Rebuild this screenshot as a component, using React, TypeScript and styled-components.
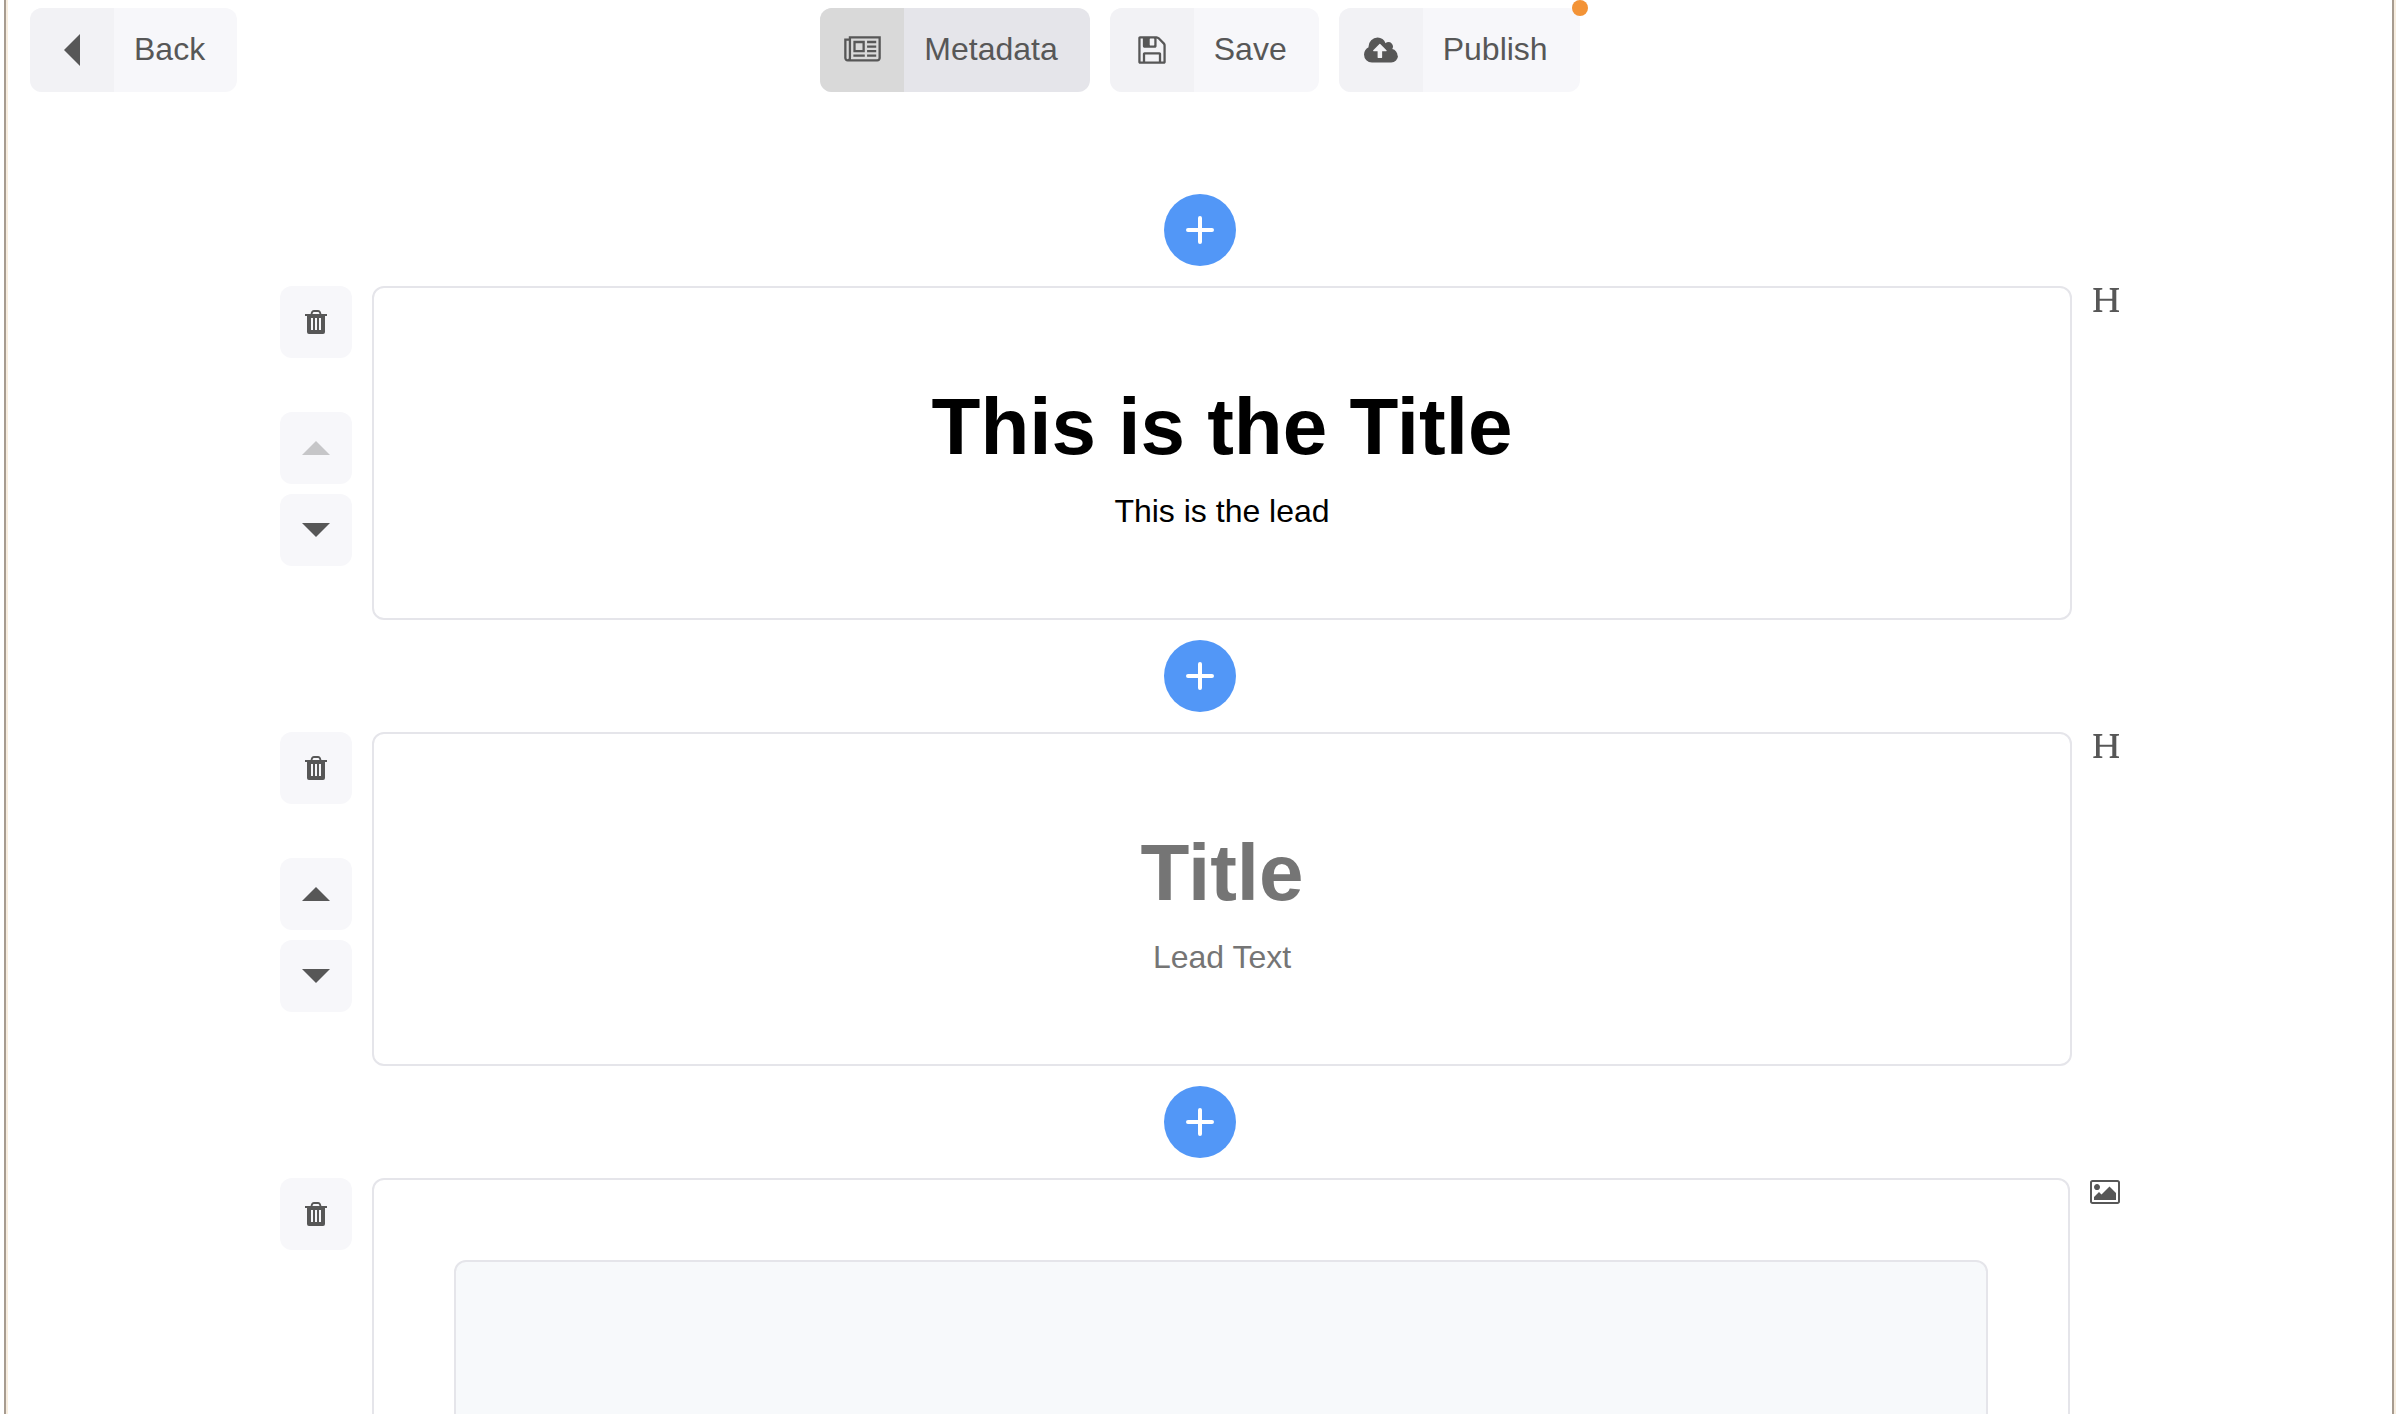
import React, { useState } from "react";
import styled, { createGlobalStyle, css } from "styled-components";

const color = {
  text: "#575757",
  subtle: "#f7f7fa",
  subtleIcon: "#f2f2f5",
  line: "#e5e5ea",
  activeIcon: "#d9d9d9",
  primary: "#5297f7",
  warning: "#f39336",
  frame: "#a79c90",
  frameLight: "#f7eddf",
};

const GlobalStyle = createGlobalStyle`
  *, *::before, *::after { box-sizing: border-box; }
  body {
    margin: 0;
    background: #fff;
    color: ${color.text};
    font-family: "Liberation Sans", Arial, Helvetica, sans-serif;
    font-size: 32px;
  }
`;

const Page = styled.div`
  height: 100vh;
  overflow: hidden;
  padding: 0 6px 0 4px;
`;

const Frame = styled.div`
  min-height: 100%;
  padding-left: 2px;
  border: solid ${color.frame};
  border-width: 0 2px;
  box-shadow: inset 2px 0 ${color.frameLight}, 2px 0 ${color.frameLight};
`;

const Toolbar = styled.header`
  display: grid;
  grid-template-columns: 1fr auto 1fr;
  padding: 8px 22px 0;
`;

const Actions = styled.div`
  display: flex;
  gap: 20px;
`;

const buttonReset = css`
  border: 0;
  padding: 0;
  font: inherit;
  color: inherit;
  cursor: pointer;
`;

const ToolButton = styled.button<{ $active?: boolean }>`
  ${buttonReset}
  position: relative;
  display: inline-flex;
  align-items: center;
  height: 84px;
  border-radius: 12px;
  background: ${(p) => (p.$active ? color.line : color.subtle)};
`;

const ToolIcon = styled.span<{ $active?: boolean }>`
  display: flex;
  align-items: center;
  justify-content: center;
  width: 84px;
  height: 100%;
  border-radius: 12px 0 0 12px;
  background: ${(p) => (p.$active ? color.activeIcon : color.subtleIcon)};
`;

const ToolLabel = styled.span`
  padding: 0 32px 2px 20px;
  line-height: 44px;
`;

const Badge = styled.span`
  position: absolute;
  top: -8px;
  right: -8px;
  width: 16px;
  height: 16px;
  border-radius: 50%;
  background: ${color.warning};
`;

const Editor = styled.main`
  display: flex;
  flex-direction: column;
  gap: 20px;
  max-width: 1840px;
  margin: 102px auto 0;
`;

const AddButton = styled.button`
  ${buttonReset}
  display: flex;
  align-items: center;
  justify-content: center;
  align-self: center;
  width: 72px;
  height: 72px;
  border-radius: 50%;
  background: ${color.primary};
`;

const Block = styled.section`
  display: flex;
  align-items: stretch;
  gap: 20px;
`;

const BlockControls = styled.div`
  display: flex;
  flex-direction: column;
`;

const SquareButton = styled.button`
  ${buttonReset}
  display: flex;
  align-items: center;
  justify-content: center;
  width: 72px;
  height: 72px;
  border-radius: 12px;
  background: ${color.subtle};

  &:disabled {
    cursor: default;
  }
  &:disabled svg {
    opacity: 0.3;
  }
`;

const MoveButtons = styled.div`
  display: flex;
  flex-direction: column;
  gap: 10px;
  margin: auto 0;
`;

const Card = styled.div`
  flex: 1;
  min-width: 0;
  padding: 80px;
  border: 2px solid ${color.line};
  border-radius: 12px;
`;

const BlockType = styled.div`
  flex: none;
`;

const Field = styled.input`
  display: block;
  width: 100%;
  padding: 0;
  border: 0;
  outline: 0;
  background: transparent;
  color: #000;
  font-family: inherit;
  text-align: center;

  &::placeholder {
    color: #757575;
    opacity: 1;
  }
`;

const TitleField = styled(Field)`
  height: 118px;
  font-size: 80px;
  font-weight: bold;
`;

const LeadField = styled(Field)`
  height: 46px;
  margin: 2px 0 4px;
  font-size: 32px;
`;

const ImageDrop = styled.div`
  height: 640px;
  border: 2px solid ${color.line};
  border-radius: 12px;
  background: #f7f9fb;
`;

const Svg = styled.svg`
  display: block;
  fill: currentColor;
`;

const BackIcon = () => (
  <Svg width="16" height="32" viewBox="0 0 16 32" aria-hidden="true">
    <path d="M16 0v32L0 16z" />
  </Svg>
);

const NewspaperIcon = () => (
  <Svg width="37" height="32" viewBox="0 0 2048 1792" aria-hidden="true">
    <path d="M1024 512h-384v384h384v-384zm-512 640h640v128h-640v-128zm0-768h640v640h-640v-640zm768 768h512v128h-512v-128zm0-256h512v128h-512v-128zm0-256h512v128h-512v-128zm0-256h512v128h-512v-128zm-1024 960v-960h-128v960q0 26 19 45t45 19 45-19 19-45zm1664 0v-1088h-1536v1088q0 33-11 64h1483q26 0 45-19t19-45zm128-1216v1216q0 80-56 136t-136 56h-1664q-80 0-136-56t-56-136v-1088h256v-128h1792z" />
  </Svg>
);

const SaveIcon = () => (
  <Svg width="32" height="32" viewBox="0 0 1792 1792" aria-hidden="true">
    <path d="M512 1536h768v-384h-768v384zm896 0h128v-896q0-14-10-38.5t-20-34.5l-281-281q-10-10-34-20t-39-10v416q0 40-28 68t-68 28h-576q-40 0-68-28t-28-68v-416h-128v1280h128v-416q0-40 28-68t68-28h832q40 0 68 28t28 68v416zm-384-928v-320q0-13-9.5-22.5t-22.5-9.5h-192q-13 0-22.5 9.5t-9.5 22.5v320q0 13 9.5 22.5t22.5 9.5h192q13 0 22.5-9.5t9.5-22.5zm640 32v928q0 40-28 68t-68 28h-1344q-40 0-68-28t-28-68v-1344q0-40 28-68t68-28h928q40 0 88 20t76 48l280 280q28 28 48 76t20 88z" />
  </Svg>
);

const CloudUploadIcon = () => (
  <Svg width="34" height="32" viewBox="0 0 1920 1792" aria-hidden="true">
    <path d="M1280 928q0-14-9-23l-352-352q-9-9-23-9t-23 9l-351 351q-10 12-10 24 0 14 9 23t23 9h224v352q0 13 9.5 22.5t22.5 9.5h192q13 0 22.5-9.5t9.5-22.5v-352h224q13 0 22.5-9.5t9.5-22.5zm640 288q0 159-112.5 271.5t-271.5 112.5h-1088q-185 0-316.5-131.5t-131.5-316.5q0-130 70-240t188-165q-2-30-2-43 0-212 150-362t362-150q156 0 275 87t173 231q71-62 166-62 106 0 181 75t75 181q0 76-41 138 130 31 213.5 135.5t83.5 238.5z" />
  </Svg>
);

const TrashIcon = () => (
  <Svg width="22" height="24" viewBox="0 0 22 24" aria-hidden="true">
    <path
      fillRule="evenodd"
      d="M0 4h5.6C6 1.400 7.200 0 9 0h4c1.800 0 3 1.400 3.400 4H22v2h-2v16a2 2 0 0 1-2 2H4a2 2 0 0 1-2-2V6H0zM7.500 4h7c-.3-1.400-.8-2-1.700-2H9.200c-.9 0-1.400.6-1.700 2zM6 8v12h2V8zM10 8v12h2V8zM14 8v12h2V8z"
    />
  </Svg>
);

const UpIcon = () => (
  <Svg width="28" height="14" viewBox="0 0 28 14" aria-hidden="true">
    <path d="M14 0l14 14H0z" />
  </Svg>
);

const DownIcon = () => (
  <Svg width="28" height="14" viewBox="0 0 28 14" aria-hidden="true">
    <path d="M0 0h28L14 14z" />
  </Svg>
);

const PlusIcon = () => (
  <Svg width="28" height="28" viewBox="0 0 28 28" aria-hidden="true">
    <path d="M14 2v24M2 14h24" stroke="#fff" strokeWidth="4" strokeLinecap="round" />
  </Svg>
);

const HeadingIcon = () => (
  <Svg width="28" height="28" viewBox="0 0 28 28" role="img" aria-label="Heading block">
    <path d="M1.300 2h9v1.500l-2.600.6v8.600h12.600V4.100l-2.600-.6V2h9.300v1.500l-2.700.6v19.800l2.700.6V26h-9.300v-1.500l2.600-.6v-9.200H7.700v9.200l2.600.6V26h-9v-1.500l2.700-.6V4.100l-2.700-.6z" />
  </Svg>
);

const ImageIcon = () => (
  <Svg width="30" height="28" viewBox="-64 0 1920 1792" role="img" aria-label="Image block">
    <path d="M576 576q0 80-56 136t-136 56-136-56-56-136 56-136 136-56 136 56 56 136zm1024 384v448h-1408v-192l320-320 160 160 512-512zm96-704h-1600q-13 0-22.500 9.500t-9.500 22.500v1216q0 13 9.500 22.500t22.500 9.500h1600q13 0 22.500-9.500t9.500-22.500v-1216q0-13-9.500-22.500t-22.500-9.500zm160 32v1216q0 66-47 113t-113 47h-1600q-66 0-113-47t-47-113v-1216q0-66 47-113t113-47h1600q66 0 113 47t47 113z" />
  </Svg>
);

type ToolProps = {
  icon: React.ReactNode;
  label: string;
  active?: boolean;
  badge?: boolean;
};

const Tool = ({ icon, label, active, badge }: ToolProps) => (
  <ToolButton type="button" $active={active}>
    <ToolIcon $active={active}>{icon}</ToolIcon>
    <ToolLabel>{label}</ToolLabel>
    {badge && <Badge />}
  </ToolButton>
);

const Controls = ({ first }: { first?: boolean }) => (
  <BlockControls>
    <SquareButton type="button" aria-label="Delete block">
      <TrashIcon />
    </SquareButton>
    <MoveButtons>
      <SquareButton type="button" aria-label="Move block up" disabled={first}>
        <UpIcon />
      </SquareButton>
      <SquareButton type="button" aria-label="Move block down">
        <DownIcon />
      </SquareButton>
    </MoveButtons>
  </BlockControls>
);

const Add = () => (
  <AddButton type="button" aria-label="Add block">
    <PlusIcon />
  </AddButton>
);

type TitleBlockProps = { title?: string; lead?: string; first?: boolean };

const TitleBlock = ({ title = "", lead = "", first }: TitleBlockProps) => {
  const [titleValue, setTitle] = useState(title);
  const [leadValue, setLead] = useState(lead);
  return (
    <Block>
      <Controls first={first} />
      <Card>
        <TitleField
          aria-label="Title"
          placeholder="Title"
          value={titleValue}
          onChange={(e) => setTitle(e.target.value)}
        />
        <LeadField
          aria-label="Lead Text"
          placeholder="Lead Text"
          value={leadValue}
          onChange={(e) => setLead(e.target.value)}
        />
      </Card>
      <BlockType>
        <HeadingIcon />
      </BlockType>
    </Block>
  );
};

const ImageBlock = () => (
  <Block>
    <Controls />
    <Card>
      <ImageDrop />
    </Card>
    <BlockType>
      <ImageIcon />
    </BlockType>
  </Block>
);

export default function App() {
  return (
    <Page>
      <GlobalStyle />
      <Frame>
        <Toolbar>
          <div>
            <Tool icon={<BackIcon />} label="Back" />
          </div>
          <Actions>
            <Tool icon={<NewspaperIcon />} label="Metadata" active />
            <Tool icon={<SaveIcon />} label="Save" />
            <Tool icon={<CloudUploadIcon />} label="Publish" badge />
          </Actions>
        </Toolbar>
        <Editor>
          <Add />
          <TitleBlock title="This is the Title" lead="This is the lead" first />
          <Add />
          <TitleBlock />
          <Add />
          <ImageBlock />
        </Editor>
      </Frame>
    </Page>
  );
}
